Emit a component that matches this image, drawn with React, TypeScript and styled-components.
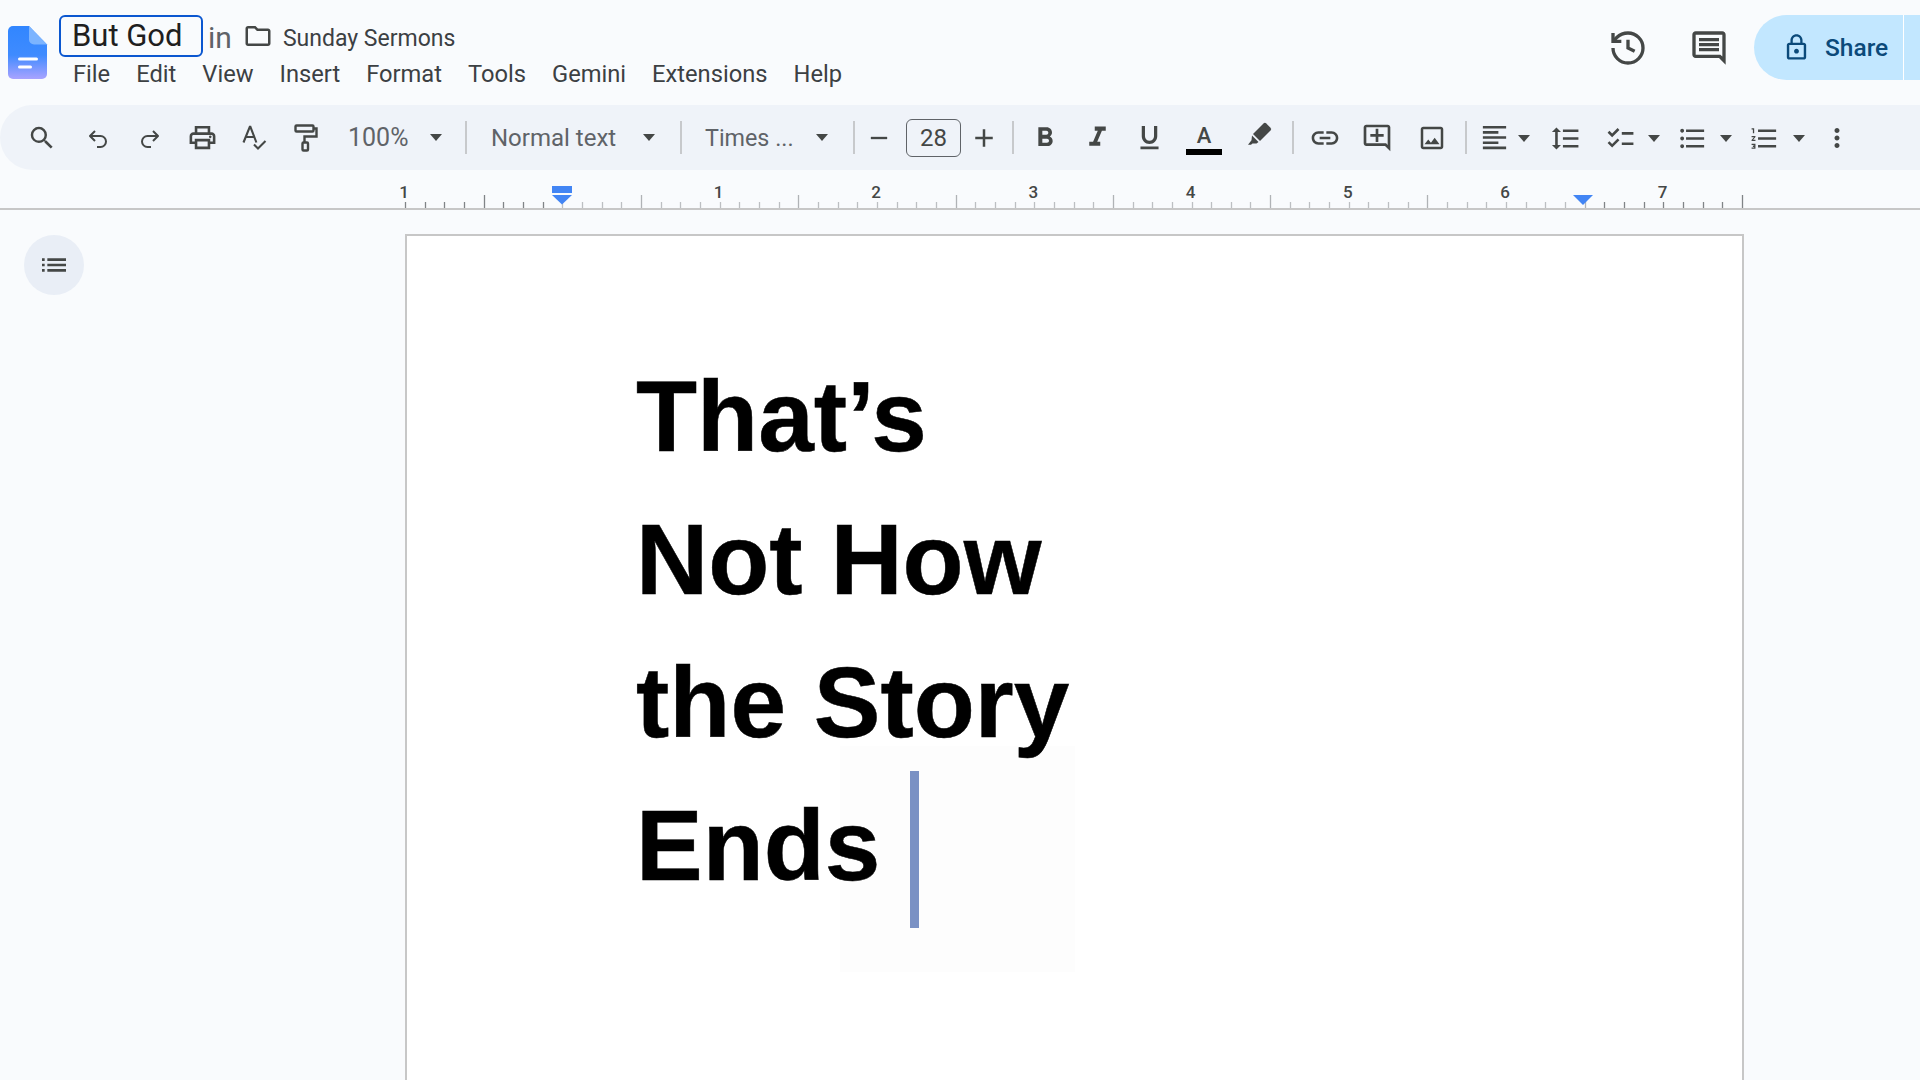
import styled, { createGlobalStyle } from "styled-components"
import { History, Undo2, Redo2 } from "lucide-react"
import {
  MdSearch,
  MdOutlinePrint,
  MdRemove,
  MdAdd,
  MdFormatBold,
  MdFormatItalic,
  MdFormatUnderlined,
  MdLink,
  MdOutlineAddComment,
  MdOutlineImage,
  MdFormatAlignLeft,
  MdFormatLineSpacing,
  MdChecklist,
  MdFormatListBulleted,
  MdFormatListNumbered,
  MdMoreVert,
  MdOutlineComment,
  MdLockOutline,
  MdOutlineFolder,
  MdList,
} from "react-icons/md"

const Global = createGlobalStyle`
  html, body {
    margin: 0;
    background: #f9fbfd;
  }
  #root {
    height: 1080px;
    overflow: hidden;
  }
`

const menus = ["File", "Edit", "View", "Insert", "Format", "Tools", "Gemini", "Extensions", "Help"]
const lines = ["That’s", "Not How", "the Story", "Ends"]

const INCH = 157.3
const ZERO = 562.4

const DocsLogo = () => (
  <svg width="40" height="54" viewBox="0 0 40 54">
    <defs>
      <linearGradient id="docsBody" x1="0" y1="0" x2="0" y2="1">
        <stop offset="0" stopColor="#3186ff" />
        <stop offset="0.55" stopColor="#3f8bff" />
        <stop offset="1" stopColor="#a9a3ff" />
      </linearGradient>
    </defs>
    <path d="M5 0h16l18 18.500V48a5 5 0 0 1-5 5H5a5 5 0 0 1-5-5V5a5 5 0 0 1 5-5z" fill="url(#docsBody)" />
    <path d="M21 0l18 18.500H26a5 5 0 0 1-5-5z" fill="#7cb4ff" />
    <rect x="10" y="31.500" width="20" height="3" rx="1.500" fill="#fff" />
    <rect x="10" y="39.500" width="14" height="3" rx="1.500" fill="#fff" />
  </svg>
)

const SpellIcon = () => (
  <svg width="26" height="26" viewBox="0 0 26 26" fill="none" stroke="#444746" strokeWidth="2.100">
    <path d="M2.500 17.500L8.800 1.800h.6l6 15.700M5 12h9" />
    <path d="M13 19.500l4 4L24.500 16" />
  </svg>
)

const PaintIcon = () => (
  <svg width="24" height="28" viewBox="0 0 24 28" fill="none" stroke="#444746" strokeWidth="2.400">
    <rect x="1.500" y="1.500" width="18" height="6" rx="1" />
    <path d="M19.500 4.500h3v8H10.500v6" />
    <rect x="8.500" y="18.500" width="5.500" height="8" rx="1" />
  </svg>
)

const HighlightIcon = () => (
  <svg width="26" height="26" viewBox="0 0 26 26" fill="#444746">
    <path d="M16.500 1.500a2 2 0 0 1 2.800 0l4.200 4.200a2 2 0 0 1 0 2.800L13 19l-7-7z" />
    <path d="M5 13.500l6.500 6.500-2 1.500H5.500L4 22.800H1l3.500-4.500z" />
  </svg>
)

const Ruler = () => {
  const ticks = Array.from({ length: 69 }, (_, i) => i)
  return (
    <RulerBar>
      <svg width="1920" height="38" viewBox="0 0 1920 38">
        {ticks.map((i) => {
          const x = Math.round(405 + (i * INCH) / 8) + 0.5
          const tall = i % 8 === 4
          const margin = i < 8 || i > 60
          return (
            <line
              key={i}
              x1={x}
              x2={x}
              y1={tall ? 25 : 32}
              y2={38}
              stroke={margin ? "#808487" : tall ? "#b0b3b6" : "#bcbfc2"}
              strokeWidth="1.300"
            />
          )
        })}
        {[-1, 1, 2, 3, 4, 5, 6, 7].map((n) => (
          <RulerNum key={n} x={ZERO + n * INCH - 1} y="28" textAnchor="middle">
            {Math.abs(n)}
          </RulerNum>
        ))}
        <rect x="552" y="16" width="20" height="7" fill="#4285f4" />
        <path d="M552 25h20l-10 9.500z" fill="#4285f4" />
        <path d="M1573 25h20l-10 10z" fill="#4285f4" />
      </svg>
    </RulerBar>
  )
}

const App = () => {
  return (
    <>
      <Global />
      <Header>
        <LogoWrap>
          <DocsLogo />
        </LogoWrap>
        <TitleCol>
          <TitleRow>
            <TitleBox>But God</TitleBox>
            <InWord>in</InWord>
            <MdOutlineFolder size={30} color="#444746" />
            <FolderName>Sunday Sermons</FolderName>
          </TitleRow>
          <MenuRow>
            {menus.map((m) => (
              <MenuItem key={m}>{m}</MenuItem>
            ))}
          </MenuRow>
        </TitleCol>
        <HeaderRight>
          <RoundIcon>
            <History size={40} strokeWidth={2} color="#444746" strokeLinecap="butt" strokeLinejoin="miter" />
          </RoundIcon>
          <RoundIcon>
            <MdOutlineComment size={40} color="#444746" />
          </RoundIcon>
          <ShareBtn>
            <MdLockOutline size={29} color="#0b4a7a" />
            <ShareLabel>Share</ShareLabel>
            <ShareDivider />
          </ShareBtn>
        </HeaderRight>
      </Header>

      <Toolbar>
        <Slot $w={52} $mr={4}><MdSearch size={30} /></Slot>
        <Slot $w={52} $dy={3}><Undo2 size={24} strokeWidth={2} strokeLinecap="butt" /></Slot>
        <Slot $w={52} $dy={3}><Redo2 size={24} strokeWidth={2} strokeLinecap="butt" /></Slot>
        <Slot $w={52}><MdOutlinePrint size={31} /></Slot>
        <Slot $w={52}><SpellIcon /></Slot>
        <Slot $w={52} $mr={4}><PaintIcon /></Slot>
        <Select $w={124} $pl={12} $pr={18}>
          <ZoomText>100%</ZoomText>
          <Caret />
        </Select>
        <Sep />
        <Select $w={203} $pl={19} $pr={20}>
          <SelectText>Normal text</SelectText>
          <Caret />
        </Select>
        <Sep />
        <Select $w={161} $pl={18} $pr={20}>
          <FontText>Times ...</FontText>
          <Caret />
        </Select>
        <Sep />
        <Slot $w={38} $mr={8}><MdRemove size={28} /></Slot>
        <SizeBox>28</SizeBox>
        <Slot $w={46}><MdAdd size={30} /></Slot>
        <Sep />
        <Slot $w={52}><MdFormatBold size={32} /></Slot>
        <Slot $w={52}><MdFormatItalic size={33} /></Slot>
        <Slot $w={52}><MdFormatUnderlined size={31} /></Slot>
        <Slot $w={58}>
          <TextColor>
            <TextColorA>A</TextColorA>
            <TextColorBar />
          </TextColor>
        </Slot>
        <Slot $w={54} $up={5}><HighlightIcon /></Slot>
        <Sep />
        <Slot $w={52}><MdLink size={32} /></Slot>
        <Slot $w={52}><MdOutlineAddComment size={32} /></Slot>
        <Slot $w={57}><MdOutlineImage size={30} /></Slot>
        <Sep />
        <Slot $w={44}><MdFormatAlignLeft size={31} /></Slot>
        <Slot $w={16} $dy={2}><Caret /></Slot>
        <Slot $w={66} $dy={2}><MdFormatLineSpacing size={31} /></Slot>
        <Slot $w={44} $dy={2}><MdChecklist size={31} /></Slot>
        <Slot $w={24} $dy={2}><Caret /></Slot>
        <Slot $w={52} $dy={2}><MdFormatListBulleted size={31} /></Slot>
        <Slot $w={16} $dy={2}><Caret /></Slot>
        <Slot $w={60} $dy={2}><MdFormatListNumbered size={31} /></Slot>
        <Slot $w={10} $dy={2}><Caret /></Slot>
        <Slot $w={66}><MdMoreVert size={30} /></Slot>
      </Toolbar>

      <Ruler />

      <Canvas>
        <Sidebar>
          <OutlineBtn>
            <MdList size={32} color="#444746" />
          </OutlineBtn>
        </Sidebar>
        <Page>
          <FaintPatch />
          <Caretbar />
          {lines.map((l) => (
            <Line key={l}>{l}</Line>
          ))}
        </Page>
      </Canvas>
    </>
  )
}

export default App

const Header = styled.div`
  height: 105px;
  display: flex;
  box-sizing: border-box;
  padding: 15px 0 0 8px;
  font-family: Roboto, "Liberation Sans", sans-serif;
`
const LogoWrap = styled.div`
  width: 51px;
  padding-top: 11px;
`
const TitleCol = styled.div`
  display: flex;
  flex-direction: column;
`
const TitleRow = styled.div`
  display: flex;
  align-items: center;
  height: 42px;
`
const TitleBox = styled.div`
  width: 144px;
  height: 42px;
  box-sizing: border-box;
  border: 2.500px solid #0b57d0;
  border-radius: 6px;
  padding-left: 11px;
  font-size: 31px;
  line-height: 37px;
  color: #1f1f1f;
`
const InWord = styled.span`
  font-size: 30px;
  color: #5f6368;
  margin: 2px 11px 0 5px;
`
const FolderName = styled.span`
  font-size: 23px;
  color: #3c4043;
  margin: 4px 0 0 10px;
`
const MenuRow = styled.div`
  display: flex;
  gap: 26px;
  padding: 2px 0 0 14px;
`
const MenuItem = styled.span`
  font-size: 23.700px;
  line-height: 30px;
  color: #3c4043;
`
const HeaderRight = styled.div`
  margin-left: auto;
  display: flex;
  align-items: flex-start;
`
const RoundIcon = styled.div`
  width: 81px;
  height: 65px;
  display: flex;
  align-items: center;
  justify-content: center;
`
const ShareBtn = styled.div`
  position: relative;
  width: 166px;
  height: 65px;
  margin-left: 5px;
  box-sizing: border-box;
  padding-left: 28px;
  display: flex;
  align-items: center;
  gap: 14px;
  background: #c2e7ff;
  border-radius: 33px 0 0 33px;
`
const ShareLabel = styled.span`
  font-size: 24.500px;
  font-weight: 500;
  color: #0b4a7a;
`
const ShareDivider = styled.div`
  position: absolute;
  top: 0;
  bottom: 0;
  left: 149px;
  width: 1px;
  background: #fff;
`
const Toolbar = styled.div`
  height: 65px;
  display: flex;
  align-items: center;
  padding-left: 16px;
  background: #eff3f9;
  border-radius: 33px 0 0 33px;
  color: #444746;
  font-family: Roboto, "Liberation Sans", sans-serif;
`
const Slot = styled.div<{ $w: number; $mr?: number; $dy?: number; $up?: number }>`
  flex: none;
  width: ${(p) => p.$w}px;
  height: 40px;
  box-sizing: border-box;
  margin-right: ${(p) => p.$mr || 0}px;
  padding-top: ${(p) => p.$dy || 0}px;
  padding-bottom: ${(p) => p.$up || 0}px;
  display: flex;
  align-items: center;
  justify-content: center;
`
const Select = styled.div<{ $w: number; $pl: number; $pr: number }>`
  flex: none;
  width: ${(p) => p.$w}px;
  box-sizing: border-box;
  padding: 0 ${(p) => p.$pr}px 0 ${(p) => p.$pl}px;
  display: flex;
  align-items: center;
  justify-content: space-between;
`
const SelectText = styled.span`
  font-size: 24px;
  color: #5f6368;
`
const ZoomText = styled(SelectText)`
  font-size: 25px;
`
const FontText = styled(SelectText)`
  font-size: 23.300px;
`
const Caret = styled.span`
  flex: none;
  width: 0;
  height: 0;
  border-left: 6.500px solid transparent;
  border-right: 6.500px solid transparent;
  border-top: 7px solid #444746;
`
const Sep = styled.div`
  flex: none;
  width: 2px;
  height: 33px;
  margin: 0 5px;
  background: #c7c9cc;
`
const SizeBox = styled.div`
  flex: none;
  width: 55px;
  height: 38px;
  box-sizing: border-box;
  border: 1.500px solid #5f6368;
  border-radius: 6px;
  display: flex;
  align-items: center;
  justify-content: center;
  font-size: 24px;
`
const TextColor = styled.div`
  display: flex;
  flex-direction: column;
  align-items: center;
`
const TextColorA = styled.span`
  font-size: 22px;
  line-height: 26px;
  padding-top: 2px;
  font-weight: 500;
`
const TextColorBar = styled.div`
  width: 36px;
  height: 6px;
  background: #000;
`
const RulerBar = styled.div`
  height: 38px;
  border-bottom: 2px solid #c7c7c7;
  svg {
    display: block;
  }
`
const RulerNum = styled.text`
  font-family: Roboto, "Liberation Sans", sans-serif;
  font-size: 17px;
  font-weight: 500;
  fill: #444746;
`
const Canvas = styled.div`
  display: flex;
  padding-top: 24px;
`
const Sidebar = styled.div`
  flex: none;
  width: 405px;
  padding: 1px 0 0 24px;
  box-sizing: border-box;
`
const OutlineBtn = styled.div`
  width: 60px;
  height: 60px;
  border-radius: 50%;
  background: #e9eef6;
  display: flex;
  align-items: center;
  justify-content: center;
`
const Page = styled.div`
  position: relative;
  width: 1339px;
  height: 900px;
  box-sizing: border-box;
  border: 2px solid #c7c7c7;
  border-bottom: none;
  background: #fff;
  padding: 109px 0 0 229px;
`
const Line = styled.div`
  position: relative;
  font-family: "Liberation Sans", Arial, sans-serif;
  font-weight: 700;
  font-size: 100px;
  line-height: 143px;
  color: #000;
  -webkit-text-stroke: 0.500px #000;
`
const Caretbar = styled.div`
  position: absolute;
  z-index: 1;
  left: 503px;
  top: 535px;
  width: 9px;
  height: 157px;
  background: #7a91c4;
`
const FaintPatch = styled.div`
  position: absolute;
  left: 433px;
  top: 510px;
  width: 235px;
  height: 226px;
  background: #fdfdfd;
`
